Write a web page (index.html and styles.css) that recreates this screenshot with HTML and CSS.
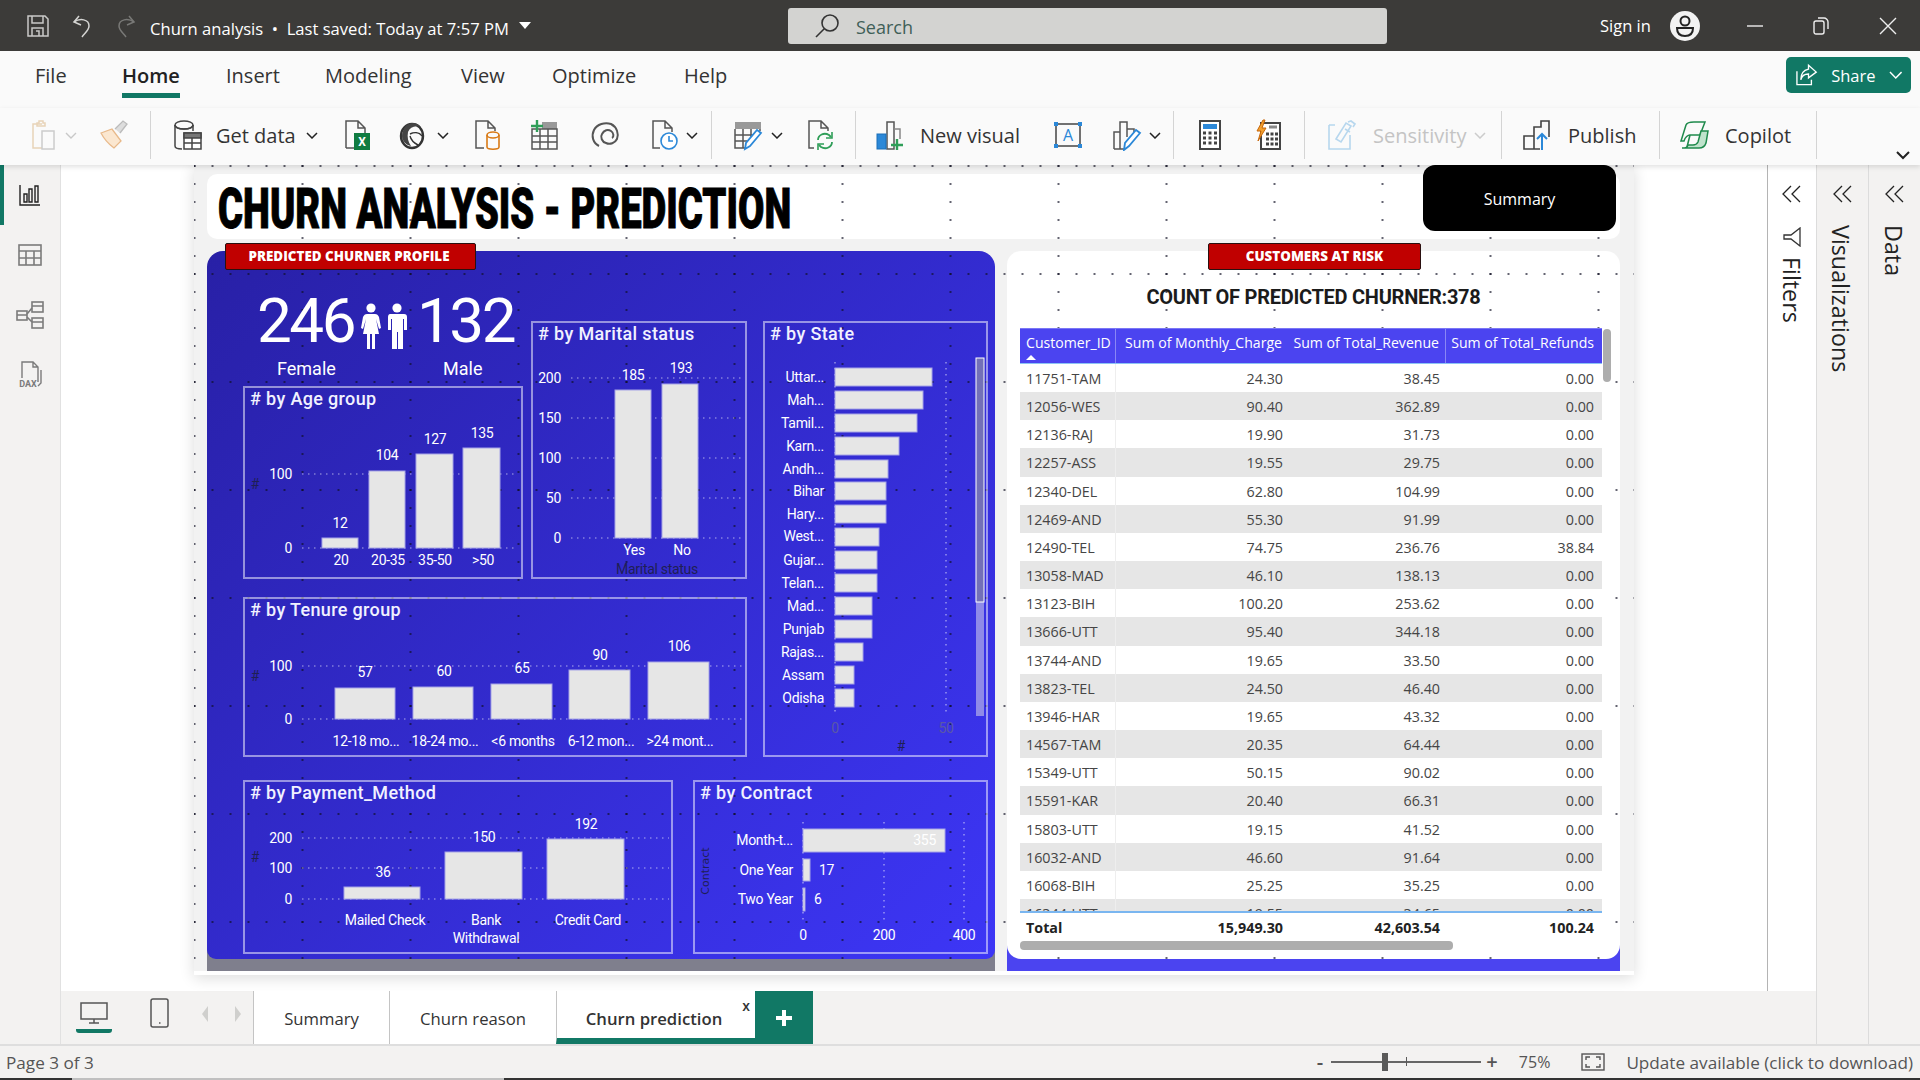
FILE: index.html
```html
<!DOCTYPE html>
<html lang="en">
<head>
    <meta charset="UTF-8">
    <title>Churn analysis</title>
    <link rel="stylesheet" href="styles.css">
</head>
<body>
<div class="app">

    <header class="titlebar">
        <div class="quick">
            <svg width="24" height="24" viewBox="0 0 24 24" fill="none" stroke="#c9c9c7" stroke-width="1.5"><path d="M2 2h17l3 3v17H2z"/><path d="M6 2v7h11V2M6 22v-8h11v8M10 17h3v5"/></svg>
            <svg width="24" height="24" viewBox="0 0 24 24" fill="none" stroke="#d5d5d3" stroke-width="1.5"><path d="M9 2 4 8l7 3"/><path d="M4 8c6-4 15-3 15 4 0 4-4 7-7 11"/></svg>
            <svg width="24" height="24" viewBox="0 0 24 24" fill="none" stroke="#797977" stroke-width="1.5"><path d="m15 2 5 6-7 3"/><path d="M20 8C14 4 5 5 5 12c0 4 4 7 7 11"/></svg>
        </div>
        <div class="doc-name">Churn analysis &nbsp;•&nbsp; Last saved: Today at 7:57 PM</div>
        <svg class="doc-caret" width="12" height="7" viewBox="0 0 12 7"><path d="M0 0h12L6 7z" fill="#fff"/></svg>
        <div class="search">
            <svg width="26" height="26" viewBox="0 0 26 26" fill="none" stroke="#333" stroke-width="1.6"><circle cx="16" cy="10" r="8"/><path d="M10 16 2 24"/></svg>
            <span>Search</span>
        </div>
        <div class="account">
            <span class="sign-in">Sign in</span>
            <svg width="30" height="30" viewBox="0 0 30 30"><circle cx="15" cy="15" r="15" fill="#f2f2f2"/><circle cx="15" cy="10" r="4.5" fill="none" stroke="#222" stroke-width="2"/><path d="M7 17h16c0 5-3 8-8 8s-8-3-8-8z" fill="none" stroke="#222" stroke-width="2"/></svg>
        </div>
        <div class="window-btns">
            <svg width="16" height="16" viewBox="0 0 16 16"><path d="M0 8h16" stroke="#eee" stroke-width="1.4"/></svg>
            <svg width="16" height="18" viewBox="0 0 16 18" fill="none" stroke="#eee" stroke-width="1.4"><rect x="1" y="4" width="10" height="13" rx="2"/><path d="M5 1h6c2 0 4 2 4 4v7"/></svg>
            <svg width="18" height="18" viewBox="0 0 18 18"><path d="m1 1 16 16M17 1 1 17" stroke="#eee" stroke-width="1.4"/></svg>
        </div>
    </header>

    <nav class="tabbar">
        <a class="menu-file">File</a>
        <a class="menu-home">Home</a>
        <a class="menu-insert">Insert</a>
        <a class="menu-modeling">Modeling</a>
        <a class="menu-view">View</a>
        <a class="menu-optimize">Optimize</a>
        <a class="menu-help">Help</a>
        <button class="share">
            <svg width="24" height="24" viewBox="0 0 24 24" fill="none" stroke="#fff" stroke-width="1.4"><path d="M2 8v14h15v-5"/><path d="M14 2l8 7-8 6v-4c-4 0-7 2-8 6 0-6 3-10 8-11z"/></svg>
            <span>Share</span>
            <svg width="14" height="8" viewBox="0 0 14 8" fill="none" stroke="#fff" stroke-width="1.5"><path d="m1 1 6 6 6-6"/></svg>
        </button>
    </nav>

    <div class="ribbon">
        <div class="rgroup g1">
            <svg width="32" height="32" viewBox="0 0 32 32" fill="none"><path d="M14 5H5v24h9" stroke="#e8d3b8" stroke-width="1.5"/><path d="M9 7V4h2V2h4v2h2v3z" stroke="#e8d3b8" stroke-width="1.5"/><rect x="14" y="12" width="12" height="18" stroke="#ccc" stroke-width="1.5"/></svg>
            <svg class="chev" width="12" height="7" viewBox="0 0 12 7" fill="none" stroke="#c8c8c8" stroke-width="1.4"><path d="m1 1 5 5 5-5"/></svg>
            <span></span>
            <svg width="32" height="32" viewBox="0 0 32 32" fill="none"><path d="m3 14 11-4 9 12-7 7C12 26 6 20 3 14z" fill="#fbe7d0" stroke="#e8b98a" stroke-width="1.3"/><path d="M17 10 25 2l4 3-7 9" fill="#ddd" stroke="#bbb" stroke-width="1.3"/></svg>
        </div>
        <div class="rgroup g2">
            <svg width="32" height="32" viewBox="0 0 32 32" fill="none" stroke="#444" stroke-width="1.5"><path d="M3 6v21c0 2 3 3 7 3M21 6v6"/><ellipse cx="12" cy="6" rx="9" ry="4"/><path d="M3 6c0 3 5 4 9 4s9-1 9-4"/><rect x="12" y="14" width="17" height="16" fill="#fff"/><path d="M12 14h17v5H12z" fill="#777"/><path d="M12 24h17M20 19v11"/></svg>
            <span class="rlabel tight">Get data</span>
            <svg class="chev" width="12" height="7" viewBox="0 0 12 7" fill="none" stroke="#222" stroke-width="1.5"><path d="m1 1 5 5 5-5"/></svg>
            <svg width="32" height="32" viewBox="0 0 32 32" fill="none"><path d="M5 29V2h12l7 7v5M17 2v7h7" stroke="#555" stroke-width="1.5"/><path d="M5 29h8" stroke="#555" stroke-width="1.5"/><rect x="13" y="14" width="16" height="17" fill="#107c41"/><text x="21" y="27" class="xl">X</text></svg>
            <svg width="32" height="32" viewBox="0 0 32 32" fill="none"><ellipse cx="15" cy="17" rx="11" ry="12" stroke="#333" stroke-width="2.4"/><path d="M7 10c2-6 12-9 17-2-6-2-11 0-13 5-1 5 0 10 3 14-5-1-9-5-9-10 0-3 1-5 2-7z" fill="#444"/><path d="M13 15c4-2 9-2 12 2M13 17c1 4 4 7 8 9" stroke="#333" stroke-width="1.4"/></svg>
            <svg class="chev" width="12" height="7" viewBox="0 0 12 7" fill="none" stroke="#222" stroke-width="1.5"><path d="m1 1 5 5 5-5"/></svg>
            <svg width="32" height="32" viewBox="0 0 32 32" fill="none"><path d="M13 29H5V2h12l7 7v3M17 2v7h7" stroke="#555" stroke-width="1.5"/><path d="M16 16v12c0 3 12 3 12 0V16" stroke="#d97a16" stroke-width="1.6"/><ellipse cx="22" cy="16" rx="6" ry="3" stroke="#d97a16" stroke-width="1.6"/></svg>
            <svg width="32" height="32" viewBox="0 0 32 32" fill="none" stroke="#555" stroke-width="1.5"><path d="M14 3h15v7H14z" fill="#999" stroke="none"/><rect x="4" y="10" width="25" height="20"/><path d="M4 17h25M4 23h25M12 10v20M20 10v20"/><path d="M9 1v12M3 7h12" stroke="#2f9e58" stroke-width="2.4"/></svg>
            <svg width="32" height="32" viewBox="0 0 32 32" fill="none" stroke="#555" stroke-width="2"><path d="M10 27C4 24 2 17 5 11 8 5 16 3 22 5c6 3 8 10 6 15-2 4-7 6-11 4-4-1-6-6-4-9 2-4 6-5 9-3 3 2 3 6 1 7"/></svg>
            <svg width="32" height="32" viewBox="0 0 32 32" fill="none"><path d="M12 29H5V2h12l7 7v4M17 2v7h7" stroke="#555" stroke-width="1.5"/><circle cx="21" cy="22" r="8" fill="#fff" stroke="#2b88d8" stroke-width="1.6"/><path d="M21 17v5h4" stroke="#2b88d8" stroke-width="1.6"/></svg>
            <svg class="chev" width="12" height="7" viewBox="0 0 12 7" fill="none" stroke="#222" stroke-width="1.5"><path d="m1 1 5 5 5-5"/></svg>
        </div>
        <div class="rgroup g3">
            <svg width="32" height="32" viewBox="0 0 32 32" fill="none" stroke="#555" stroke-width="1.5"><path d="M3 3h26v7H3z" fill="#999" stroke="none"/><path d="M3 10v19h12M3 16h18M3 22h12M11 10v19M19 10v8M28 10v2"/><path d="m13 30 1-6L25 11l4 3-11 13z" fill="#fff" stroke="#2b88d8" stroke-width="1.8"/></svg>
            <svg class="chev" width="12" height="7" viewBox="0 0 12 7" fill="none" stroke="#222" stroke-width="1.5"><path d="m1 1 5 5 5-5"/></svg>
            <svg width="32" height="32" viewBox="0 0 32 32" fill="none"><path d="M10 29H5V2h12l7 7v3M17 2v7h7" stroke="#555" stroke-width="1.5"/><path d="M14 21c0-5 6-8 11-5l2 2M28 23c0 5-6 8-11 5l-2-2" stroke="#2f9e58" stroke-width="1.8"/><path d="M28 13v6h-6M14 31v-6h6" stroke="#2f9e58" stroke-width="1.6"/></svg>
        </div>
        <div class="rgroup g4">
            <svg width="32" height="32" viewBox="0 0 32 32" fill="none"><rect x="14" y="3" width="7" height="27" stroke="#555" stroke-width="1.5"/><path d="M21 10h6v10" stroke="#888" stroke-width="1.5"/><rect x="4" y="15" width="9" height="15" fill="#2b88d8" stroke="#1b6fb8"/><path d="M24 20v11M18 26h12" stroke="#2f9e58" stroke-width="2.4"/></svg>
            <span class="rlabel">New visual</span>
            <svg width="30" height="28" viewBox="0 0 30 28" fill="none"><rect x="3" y="3" width="24" height="22" stroke="#444" stroke-width="1.5"/><path d="M1 1h4v4H1zM25 1h4v4h-4zM1 23h4v4H1zM25 23h4v4h-4z" fill="#2b88d8"/><text x="15" y="20" class="abox">A</text></svg>
            <svg width="32" height="32" viewBox="0 0 32 32" fill="none"><path d="M3 30V13h6V3h7v7h7v6M3 30h10M9 13v17M16 10v8" stroke="#555" stroke-width="1.5"/><path d="m13 31 1-7L25 11l4 3-11 13z" fill="#fff" stroke="#2b88d8" stroke-width="1.8"/></svg>
            <svg class="chev" width="12" height="7" viewBox="0 0 12 7" fill="none" stroke="#222" stroke-width="1.5"><path d="m1 1 5 5 5-5"/></svg>
        </div>
        <div class="rgroup g5">
            <svg width="24" height="32" viewBox="0 0 24 32" fill="none"><rect x="2" y="2" width="20" height="28" fill="#fff" stroke="#444" stroke-width="2"/><rect x="5" y="5" width="14" height="5" fill="#2b88d8"/><path d="M5 14h14M5 19h14M5 24h14" stroke="#444" stroke-width="3" stroke-dasharray="3 2.5"/></svg>
            <svg width="28" height="32" viewBox="0 0 28 32" fill="none"><rect x="7" y="4" width="19" height="26" fill="#fff" stroke="#444" stroke-width="2"/><path d="M15 8h8" stroke="#888" stroke-width="3"/><path d="M12 15h12M12 20h12M12 25h12" stroke="#444" stroke-width="3" stroke-dasharray="3 1.5"/><path d="M9 1 3 12h4L4 22l8-13H8l3-8z" fill="#f0a030" stroke="#c8670a"/></svg>
        </div>
        <div class="rgroup g6">
            <svg width="32" height="32" viewBox="0 0 32 32" fill="none" stroke="#b7d7ee" stroke-width="1.6"><path d="M3 6h6M3 6v24h21V16"/><path d="m10 20 10-16 5 3-10 16zM19 10l5 3M22 3l3-1 4 3-2 3"/></svg>
            <span class="rlabel muted">Sensitivity</span>
            <svg class="chev" width="12" height="7" viewBox="0 0 12 7" fill="none" stroke="#ccc" stroke-width="1.5"><path d="m1 1 5 5 5-5"/></svg>
        </div>
        <div class="rgroup g7">
            <svg width="32" height="32" viewBox="0 0 32 32" fill="none"><path d="M3 30V17h10v13zM13 17V8h7V2h8v16M13 30h6" stroke="#444" stroke-width="1.6"/><path d="M21 31V15M16 20l5-5 5 5" stroke="#2b88d8" stroke-width="2"/></svg>
            <span class="rlabel">Publish</span>
        </div>
        <div class="rgroup g8">
            <svg width="32" height="32" viewBox="0 0 32 32" fill="none" stroke="#1f8a4c" stroke-width="1.5"><path d="M8 6c1-3 5-3 8-3h11l-5 13H12c-2 0-5 2-6 6L3 22z"/><path d="M10 26c-1 3-3 3-6 3h17c3 0 6-2 7-5l2-12h-7l-3 11c-1 2-3 3-5 3z" fill="#bfe3cc"/><path d="M12 16 9 28"/></svg>
            <span class="rlabel">Copilot</span>
        </div>
        <svg class="ribbon-toggle" width="14" height="9" viewBox="0 0 14 9" fill="none" stroke="#222" stroke-width="2"><path d="m1 1 6 6 6-6"/></svg>
    </div>

    <main class="main">
        <aside class="rail">
            <span class="rail-active"></span>
            <svg width="22" height="22" viewBox="0 0 22 22" fill="none" stroke="#222" stroke-width="1.4"><path d="M1 1v20h20"/><path d="M5 10h3v8H5zM10 5h3v13h-3zM16 2h3v16h-3z"/></svg>
            <svg width="24" height="22" viewBox="0 0 24 22" fill="none" stroke="#7b7b7b" stroke-width="1.6"><rect x="1" y="1" width="22" height="20"/><path d="M1 7h22M1 14h22M8 7v14M16 7v14"/></svg>
            <svg width="28" height="28" viewBox="0 0 28 28" fill="none" stroke="#7b7b7b" stroke-width="1.6"><rect x="1" y="10" width="10" height="9"/><rect x="16" y="1" width="11" height="10"/><rect x="16" y="17" width="11" height="10"/><path d="M1 14h10M16 5h11M16 21h11M11 13l5-6M11 16l5 5"/></svg>
            <svg width="28" height="30" viewBox="0 0 28 30" fill="none" stroke="#7b7b7b" stroke-width="1.4"><path d="M6 18V2h11l5 5v15M17 2v5h5M25 10v13l-3 3"/><text x="12" y="27" class="dax">DAX</text></svg>
        </aside>

        <div class="center">
            <div class="workspace">
                <div class="canvas">
                    <section class="page dots">
                        <div class="banner dots">
                            <h1>CHURN ANALYSIS - PREDICTION</h1>
                        </div>
                        <button class="summary-btn">Summary</button>

                        <div class="report-row">
                            <div class="left-wrap">
                                <span class="red-label left-label">PREDICTED CHURNER PROFILE</span>
                                <div class="panel">

                                    <div class="kpi">
                                        <div class="kpi-nums">
                                            <span class="kpi-num">246</span>
                                            <svg width="46" height="46" viewBox="0 0 46 46" fill="#fff"><circle cx="10" cy="5" r="4.6"/><path d="M6 11h8c2 0 3 1 4 3l2 11-2 1-3-10 3 15h-4v15h-3V31H9v15H6V31H2l3-15-3 10-2-1 2-11c1-2 2-3 4-3z"/><circle cx="36" cy="5" r="4.6"/><path d="M29 11h14c2 0 3 1 3 3v13h-3V16h-1v30h-5V29h-1v17h-5V16h-1v11h-3V14c0-2 1-3 2-3z"/></svg>
                                            <span class="kpi-num">132</span>
                                        </div>
                                        <div class="kpi-labels">
                                            <span class="kpi-female">Female</span>
                                            <span>Male</span>
                                        </div>
                                    </div>

                                    <div class="visual v-age">
                                        <h2># by Age group</h2>
                                        <svg width="280" height="167" viewBox="243 412 280 167">
                                            <path class="grid" d="M302 474H518M302 548H518"/>
                                            <text class="yl" x="292" y="479">100</text>
                                            <text class="yl" x="292" y="553">0</text>
                                            <text class="axt" x="255" y="489">#</text>
                                            <rect class="bar" x="322" y="538" width="36" height="10"/>
                                            <rect class="bar" x="369" y="471" width="36" height="77"/>
                                            <rect class="bar" x="416" y="454" width="37" height="94"/>
                                            <rect class="bar" x="463" y="448" width="37" height="100"/>
                                            <text class="vl" x="340" y="528">12</text>
                                            <text class="vl" x="387" y="460">104</text>
                                            <text class="vl" x="435" y="444">127</text>
                                            <text class="vl" x="482" y="438">135</text>
                                            <text class="vl" x="341" y="565">20</text>
                                            <text class="vl" x="388" y="565">20-35</text>
                                            <text class="vl" x="435" y="565">35-50</text>
                                            <text class="vl" x="483" y="565">&gt;50</text>
                                        </svg>
                                    </div>

                                    <div class="visual v-marital">
                                        <h2># by Marital status</h2>
                                        <svg width="216" height="233" viewBox="531 347 216 233">
                                            <path class="grid" d="M571 378H742M571 418H742M571 458H742M571 498H742M571 538H742"/>
                                            <text class="yl" x="561" y="383">200</text>
                                            <text class="yl" x="561" y="423">150</text>
                                            <text class="yl" x="561" y="463">100</text>
                                            <text class="yl" x="561" y="503">50</text>
                                            <text class="yl" x="561" y="543">0</text>
                                            <rect class="bar" x="615" y="390" width="36" height="148"/>
                                            <rect class="bar" x="662" y="384" width="36" height="154"/>
                                            <text class="vl" x="633" y="380">185</text>
                                            <text class="vl" x="681" y="373">193</text>
                                            <text class="vl" x="634" y="555">Yes</text>
                                            <text class="vl" x="682" y="555">No</text>
                                            <text class="axt" x="657" y="574">Marital status</text>
                                        </svg>
                                    </div>

                                    <div class="visual v-state">
                                        <h2># by State</h2>
                                        <svg width="225" height="410" viewBox="763 347 225 410">
                                            <path class="grid" d="M835 362V715M946 362V715"/>
                                            <rect class="bar" x="835" y="368" width="97" height="18"/>
                                            <rect class="bar" x="835" y="391" width="88" height="18"/>
                                            <rect class="bar" x="835" y="414" width="82" height="18"/>
                                            <rect class="bar" x="835" y="437" width="64" height="18"/>
                                            <rect class="bar" x="835" y="460" width="53" height="18"/>
                                            <rect class="bar" x="835" y="482" width="51" height="18"/>
                                            <rect class="bar" x="835" y="505" width="51" height="18"/>
                                            <rect class="bar" x="835" y="528" width="44" height="18"/>
                                            <rect class="bar" x="835" y="551" width="42" height="18"/>
                                            <rect class="bar" x="835" y="574" width="42" height="18"/>
                                            <rect class="bar" x="835" y="597" width="37" height="18"/>
                                            <rect class="bar" x="835" y="620" width="37" height="18"/>
                                            <rect class="bar" x="835" y="643" width="28" height="18"/>
                                            <rect class="bar" x="835" y="666" width="19" height="18"/>
                                            <rect class="bar" x="835" y="689" width="19" height="18"/>
                                            <text class="yl" x="824" y="382">Uttar...</text>
                                            <text class="yl" x="824" y="405">Mah...</text>
                                            <text class="yl" x="824" y="428">Tamil...</text>
                                            <text class="yl" x="824" y="451">Karn...</text>
                                            <text class="yl" x="824" y="474">Andh...</text>
                                            <text class="yl" x="824" y="496">Bihar</text>
                                            <text class="yl" x="824" y="519">Hary...</text>
                                            <text class="yl" x="824" y="541">West...</text>
                                            <text class="yl" x="824" y="565">Gujar...</text>
                                            <text class="yl" x="824" y="588">Telan...</text>
                                            <text class="yl" x="824" y="611">Mad...</text>
                                            <text class="yl" x="824" y="634">Punjab</text>
                                            <text class="yl" x="824" y="657">Rajas...</text>
                                            <text class="yl" x="824" y="680">Assam</text>
                                            <text class="yl" x="824" y="703">Odisha</text>
                                            <text class="dim" x="835" y="733">0</text>
                                            <text class="dim" x="946" y="733">50</text>
                                            <text class="axt" x="901" y="751">#</text>
                                            <rect class="track" x="976" y="358" width="8" height="358"/>
                                            <rect class="thumb" x="976" y="358" width="8" height="244"/>
                                        </svg>
                                    </div>

                                    <div class="visual v-tenure">
                                        <h2># by Tenure group</h2>
                                        <svg width="504" height="134" viewBox="243 623 504 134">
                                            <path class="grid" d="M302 666H742M302 719H742"/>
                                            <text class="yl" x="292" y="671">100</text>
                                            <text class="yl" x="292" y="724">0</text>
                                            <text class="axt" x="255" y="681">#</text>
                                            <rect class="bar" x="335" y="688" width="60" height="31"/>
                                            <rect class="bar" x="413" y="687" width="60" height="32"/>
                                            <rect class="bar" x="491" y="684" width="61" height="35"/>
                                            <rect class="bar" x="569" y="670" width="61" height="49"/>
                                            <rect class="bar" x="648" y="662" width="61" height="57"/>
                                            <text class="vl" x="365" y="677">57</text>
                                            <text class="vl" x="444" y="676">60</text>
                                            <text class="vl" x="522" y="673">65</text>
                                            <text class="vl" x="600" y="660">90</text>
                                            <text class="vl" x="679" y="651">106</text>
                                            <text class="vl" x="366" y="746">12-18 mo...</text>
                                            <text class="vl" x="445" y="746">18-24 mo...</text>
                                            <text class="vl" x="523" y="746">&lt;6 months</text>
                                            <text class="vl" x="601" y="746">6-12 mon...</text>
                                            <text class="vl" x="680" y="746">&gt;24 mont...</text>
                                        </svg>
                                    </div>

                                    <div class="visual v-payment">
                                        <h2># by Payment_Method</h2>
                                        <svg width="430" height="148" viewBox="243 806 430 148">
                                            <path class="grid" d="M302 838H669M302 868H669M302 899H669"/>
                                            <text class="yl" x="292" y="843">200</text>
                                            <text class="yl" x="292" y="873">100</text>
                                            <text class="yl" x="292" y="904">0</text>
                                            <text class="axt" x="255" y="862">#</text>
                                            <rect class="bar" x="344" y="887" width="76" height="12"/>
                                            <rect class="bar" x="445" y="852" width="77" height="47"/>
                                            <rect class="bar" x="547" y="839" width="77" height="60"/>
                                            <text class="vl" x="383" y="877">36</text>
                                            <text class="vl" x="484" y="842">150</text>
                                            <text class="vl" x="586" y="829">192</text>
                                            <text class="vl" x="385" y="925">Mailed Check</text>
                                            <text class="vl" x="486" y="925">Bank</text>
                                            <text class="vl" x="486" y="943">Withdrawal</text>
                                            <text class="vl" x="588" y="925">Credit Card</text>
                                        </svg>
                                    </div>

                                    <div class="visual v-contract">
                                        <h2># by Contract</h2>
                                        <svg width="295" height="148" viewBox="693 806 295 148">
                                            <path class="grid" d="M803 822V923M884 822V923M964 822V923"/>
                                            <rect class="bar" x="803" y="829" width="142" height="23"/>
                                            <rect class="bar" x="803" y="859" width="7" height="22"/>
                                            <rect class="bar" x="803" y="888" width="2" height="23"/>
                                            <text class="yl" x="793" y="845">Month-t...</text>
                                            <text class="yl" x="793" y="875">One Year</text>
                                            <text class="yl" x="793" y="904">Two Year</text>
                                            <text class="yl" x="936" y="845">355</text>
                                            <text class="vs" x="819" y="875">17</text>
                                            <text class="vs" x="814" y="904">6</text>
                                            <text class="vl" x="803" y="940">0</text>
                                            <text class="vl" x="884" y="940">200</text>
                                            <text class="vl" x="964" y="940">400</text>
                                            <text class="contract-axis" transform="translate(709 871) rotate(-90)">Contract</text>
                                        </svg>
                                    </div>
                                </div>
                            </div>

                            <div class="right-wrap">
                                <span class="red-label right-label">CUSTOMERS AT RISK</span>
                                <div class="risk-card dots">
                                    <h3>COUNT OF PREDICTED CHURNER:378</h3>
                                    <div class="tbl">
                                        <div class="tr thead">
                                            <div class="td id">Customer_ID<i class="sort"></i></div>
                                            <div class="td">Sum of Monthly_Charge</div>
                                            <div class="td">Sum of Total_Revenue</div>
                                            <div class="td">Sum of Total_Refunds</div>
                                        </div>
                                        <div class="tbody">
                                            <div class="tr"><div class="td id">11751-TAM</div><div class="td">24.30</div><div class="td">38.45</div><div class="td">0.00</div></div>
                                            <div class="tr"><div class="td id">12056-WES</div><div class="td">90.40</div><div class="td">362.89</div><div class="td">0.00</div></div>
                                            <div class="tr"><div class="td id">12136-RAJ</div><div class="td">19.90</div><div class="td">31.73</div><div class="td">0.00</div></div>
                                            <div class="tr"><div class="td id">12257-ASS</div><div class="td">19.55</div><div class="td">29.75</div><div class="td">0.00</div></div>
                                            <div class="tr"><div class="td id">12340-DEL</div><div class="td">62.80</div><div class="td">104.99</div><div class="td">0.00</div></div>
                                            <div class="tr"><div class="td id">12469-AND</div><div class="td">55.30</div><div class="td">91.99</div><div class="td">0.00</div></div>
                                            <div class="tr"><div class="td id">12490-TEL</div><div class="td">74.75</div><div class="td">236.76</div><div class="td">38.84</div></div>
                                            <div class="tr"><div class="td id">13058-MAD</div><div class="td">46.10</div><div class="td">138.13</div><div class="td">0.00</div></div>
                                            <div class="tr"><div class="td id">13123-BIH</div><div class="td">100.20</div><div class="td">253.62</div><div class="td">0.00</div></div>
                                            <div class="tr"><div class="td id">13666-UTT</div><div class="td">95.40</div><div class="td">344.18</div><div class="td">0.00</div></div>
                                            <div class="tr"><div class="td id">13744-AND</div><div class="td">19.65</div><div class="td">33.50</div><div class="td">0.00</div></div>
                                            <div class="tr"><div class="td id">13823-TEL</div><div class="td">24.50</div><div class="td">46.40</div><div class="td">0.00</div></div>
                                            <div class="tr"><div class="td id">13946-HAR</div><div class="td">19.65</div><div class="td">43.32</div><div class="td">0.00</div></div>
                                            <div class="tr"><div class="td id">14567-TAM</div><div class="td">20.35</div><div class="td">64.44</div><div class="td">0.00</div></div>
                                            <div class="tr"><div class="td id">15349-UTT</div><div class="td">50.15</div><div class="td">90.02</div><div class="td">0.00</div></div>
                                            <div class="tr"><div class="td id">15591-KAR</div><div class="td">20.40</div><div class="td">66.31</div><div class="td">0.00</div></div>
                                            <div class="tr"><div class="td id">15803-UTT</div><div class="td">19.15</div><div class="td">41.52</div><div class="td">0.00</div></div>
                                            <div class="tr"><div class="td id">16032-AND</div><div class="td">46.60</div><div class="td">91.64</div><div class="td">0.00</div></div>
                                            <div class="tr"><div class="td id">16068-BIH</div><div class="td">25.25</div><div class="td">35.25</div><div class="td">0.00</div></div>
                                            <div class="tr"><div class="td id">16344-UTT</div><div class="td">19.55</div><div class="td">34.65</div><div class="td">0.00</div></div>
                                        </div>
                                        <div class="tr tfoot">
                                            <div class="td id">Total</div><div class="td">15,949.30</div><div class="td">42,603.54</div><div class="td">100.24</div>
                                        </div>
                                        <div class="hbar"></div>
                                        <div class="vbar"></div>
                                    </div>
                                </div>
                            </div>
                        </div>
                    </section>
                </div>
                <aside class="pane filters">
                    <svg width="20" height="18" viewBox="0 0 20 18" fill="none" stroke="#222" stroke-width="1.3"><path d="M9 1 1 9l8 8M18 1l-8 8 8 8"/></svg>
                    <svg class="funnel" width="18" height="20" viewBox="0 0 18 20" fill="none" stroke="#333" stroke-width="1.3"><path d="M17 1v18L8 12H1V8h7z"/></svg>
                    <span class="pane-title">Filters</span>
                </aside>
            </div>

            <div class="page-tabs">
                <div class="view-switch">
                    <span class="view-desktop">
                        <svg width="28" height="22" viewBox="0 0 28 22" fill="none" stroke="#555" stroke-width="1.5"><rect x="1" y="1" width="26" height="16"/><path d="M14 17v4M9 21h10"/></svg>
                    </span>
                    <svg class="view-phone" width="19" height="30" viewBox="0 0 19 30" fill="none" stroke="#555" stroke-width="1.5"><rect x="1" y="1" width="17" height="28" rx="2"/><path d="M9 25h1.500"/></svg>
                    <svg class="view-prev" width="8" height="18" viewBox="0 0 8 18"><path d="M7 1v16L1 9z" fill="#cfcfcd"/></svg>
                    <svg class="view-next" width="8" height="18" viewBox="0 0 8 18"><path d="M1 1v16l6-8z" fill="#cfcfcd"/></svg>
                </div>
                <a class="page-tab tab-summary">Summary</a>
                <a class="page-tab tab-reason">Churn reason</a>
                <a class="page-tab tab-active">Churn prediction<span class="tab-close">x</span></a>
                <a class="tab-add">
                    <svg width="18" height="18" viewBox="0 0 18 18"><path d="M9 1v16M1 9h16" stroke="#fff" stroke-width="4"/></svg>
                </a>
            </div>
        </div>

        <aside class="pane viz">
            <svg width="20" height="18" viewBox="0 0 20 18" fill="none" stroke="#222" stroke-width="1.3"><path d="M9 1 1 9l8 8M18 1l-8 8 8 8"/></svg>
            <span class="pane-title">Visualizations</span>
        </aside>
        <aside class="pane data">
            <svg width="20" height="18" viewBox="0 0 20 18" fill="none" stroke="#222" stroke-width="1.3"><path d="M9 1 1 9l8 8M18 1l-8 8 8 8"/></svg>
            <span class="pane-title">Data</span>
        </aside>
    </main>

    <footer class="statusbar">
        <span class="page-count">Page 3 of 3</span>
        <div class="zoom-ctl">
            <span class="zoom-sign">-</span>
            <div class="slider"><i class="slider-thumb"></i><i class="slider-tick"></i></div>
            <span class="zoom-sign">+</span>
            <span class="zoom-val">75%</span>
            <svg width="24" height="18" viewBox="0 0 24 18" fill="none"><rect x="1" y="1" width="22" height="16" stroke="#555" stroke-width="1.4"/><path d="M5 7V4h4M15 4h4v3M19 11v3h-4M9 14H5v-3" stroke="#555" stroke-width="1.4"/></svg>
            <span class="update">Update available (click to download)</span>
        </div>
    </footer>
    <div class="taskstrip"><i></i><i></i><i></i></div>
</div>
</body>
</html>
```

FILE: styles.css
```css
* {
    box-sizing: border-box;
}

:root {
    --ui: "Open Sans", "Noto Sans", sans-serif;
    --din: Roboto, "Liberation Sans", sans-serif;
    --dot-row: radial-gradient(circle, rgba(15,15,35,.65) .7px, transparent 1.2px);
    --dot-col: radial-gradient(circle, rgba(15,15,35,.65) .7px, transparent 1.2px);
    --green: #117865;
}

html, body {
    margin: 0;
    height: 100%;
    overflow: hidden;
}

body {
    font-family: var(--ui);
    color: #333;
    background: #f3f2f1;
}

.app {
    display: flex;
    flex-direction: column;
    width: 1920px;
    height: 1080px;
}

/* title bar */

.titlebar {
    display: flex;
    align-items: center;
    height: 51px;
    flex: none;
    background: #3c3b39;
    color: #fff;
}

.quick {
    display: grid;
    grid-template-columns: 44px 44px 36px;
    padding-left: 26px;
}

.doc-name {
    font-size: 16.6px;
    margin-top: 5px;
    white-space: nowrap;
    width: 369px;
}

.doc-caret {
    margin-right: 257px;
}

.search {
    display: flex;
    align-items: center;
    gap: 16px;
    width: 599px;
    height: 36px;
    padding-left: 26px;
    background: #d3d3d1;
    border-radius: 3px;
    font-size: 18px;
    color: #3f5f58;
}

.search span {
    padding-top: 2px;
}

.account {
    display: flex;
    align-items: center;
    gap: 19px;
    margin-left: 213px;
}

.sign-in {
    font-size: 16.5px;
}

.window-btns {
    display: grid;
    grid-template-columns: 66px 66px 18px;
    margin-left: 47px;
    align-items: center;
}

/* menu tabs */

.tabbar {
    position: relative;
    height: 57px;
    flex: none;
    display: flex;
    align-items: flex-start;
    background: #fafafa;
    font-size: 20px;
    color: #333;
}

.tabbar a {
    position: absolute;
    top: 11px;
    line-height: 28px;
}

.menu-file { left: 35px; }
.menu-home { left: 122px; font-weight: 600; color: #222; }
.menu-insert { left: 226px; }
.menu-modeling { left: 325px; }
.menu-view { left: 461px; }
.menu-optimize { left: 552px; }
.menu-help { left: 684px; }

.menu-home::after {
    content: "";
    display: block;
    height: 5px;
    margin-top: 3px;
    background: var(--green);
}

.share {
    display: flex;
    align-items: center;
    gap: 13px;
    margin-left: auto;
    margin-right: 9px;
    margin-top: 6px;
    width: 125px;
    height: 36px;
    padding: 0 9px;
    border: 0;
    border-radius: 5px;
    background: var(--green);
    color: #fff;
    font: 16.5px var(--ui);
}

/* ribbon */

.ribbon {
    position: relative;
    z-index: 2;
    height: 57px;
    flex: none;
    display: flex;
    background: #fafafa;
    box-shadow: 0 2px 5px rgba(0,0,0,.12);
}

.rgroup {
    display: grid;
    align-items: center;
    justify-items: center;
    height: 48px;
    margin-top: 3px;
    border-right: 1px solid #d4d4d4;
    flex: none;
}

.g1 { width: 151px; padding-left: 28px; grid-template-columns: 32px 22px 16px 32px; justify-content: start; }
.g2 { width: 561px; padding-left: 21px; grid-template-columns: 32px 100px 16px 74px 38px 22px 66px 48px 74px 44px 12px; justify-content: start; }
.g3 { width: 144px; padding-left: 20px; grid-template-columns: 32px 26px 60px; justify-content: start; }
.g4 { width: 318px; padding-left: 17px; grid-template-columns: 32px 125px 75px 44px 12px; justify-content: start; }
.g5 { width: 131px; padding-left: 10px; grid-template-columns: 52px 64px; justify-content: start; }
.g6 { width: 197px; padding-left: 21px; grid-template-columns: 32px 115px 14px; justify-content: start; }
.g7 { width: 158px; padding-left: 19px; grid-template-columns: 32px auto; justify-content: start; }
.g8 { width: 157px; padding-left: 18px; grid-template-columns: 32px auto; justify-content: start; }

.rlabel {
    justify-self: start;
    padding-left: 15px;
    font-size: 20px;
    color: #333;
    white-space: nowrap;
}

.rlabel.tight {
    padding-left: 12px;
}

.rlabel.muted {
    color: #c4c4c4;
}

.ribbon-toggle {
    margin: 43px 0 0 79px;
}

.xl {
    font: bold 12px var(--din);
    fill: #fff;
    text-anchor: middle;
}

.abox {
    font: 16px var(--ui);
    fill: #2b88d8;
    text-anchor: middle;
}

.dax {
    font: bold 9px var(--din);
    fill: #7b7b7b;
    stroke: none;
    text-anchor: middle;
}

/* main area */

.main {
    display: flex;
    height: 879px;
    flex: none;
}

.rail {
    position: relative;
    width: 61px;
    flex: none;
    display: grid;
    grid-auto-rows: 60px;
    justify-items: center;
    align-items: center;
    background: #f3f2f1;
    border-right: 1px solid #e1e1e1;
}

.rail-active {
    position: absolute;
    left: 0;
    top: 0;
    width: 4px;
    height: 60px;
    background: var(--green);
}

.center {
    width: 1755px;
    flex: none;
    display: flex;
    flex-direction: column;
}

.workspace {
    display: flex;
    height: 826px;
    flex: none;
}

.canvas {
    width: 1706px;
    flex: none;
    padding-left: 133px;
    background: #fff;
}

.dots {
    background-image: var(--dot-row), var(--dot-col);
    background-size: 18px 108px, 108px 18px;
    background-position: 5.5px 4px, 32.5px -5px;
    background-attachment: fixed;
    background-repeat: repeat;
}

.page {
    position: relative;
    width: 1440px;
    height: 810px;
    padding: 9px 14px 0 13px;
    background-color: #f2f2f2;
    border-bottom: 4px solid #fff;
    box-shadow: 0 3px 14px rgba(0,0,0,.14);
}

.banner {
    height: 65px;
    padding: 10px 0 0 11px;
    background-color: #fff;
    border-radius: 10px;
}

.banner h1 {
    margin: 0;
    font: 900 56px/50px Roboto, sans-serif;
    color: #000;
    -webkit-text-stroke: 1px #000;
    white-space: nowrap;
    transform: scaleX(.682);
    transform-origin: left center;
}

.summary-btn {
    position: absolute;
    top: 0;
    right: 18px;
    width: 193px;
    height: 66px;
    padding-top: 3px;
    border: 0;
    border-radius: 12px;
    background: #000;
    color: #fff;
    font: 16px var(--ui);
}

.report-row {
    display: flex;
    gap: 12px;
    margin-top: 12px;
}

.left-wrap, .right-wrap {
    position: relative;
    height: 720px;
    flex: none;
}

.left-wrap {
    width: 788px;
    background: linear-gradient(transparent 690px, #7f7f8d 690px);
}

.right-wrap {
    width: 613px;
    background: linear-gradient(transparent 690px, #4b44f0 690px);
}

.red-label {
    position: absolute;
    top: -8px;
    z-index: 1;
    height: 27px;
    background: #c00000;
    border: 1px solid #2a1010;
    border-radius: 2px;
    color: #fff;
    font: 800 13.4px/25px var(--ui);
    text-align: center;
    white-space: nowrap;
}

.left-label { left: 18px; width: 251px; padding-right: 3px; }
.right-label { left: 201px; width: 213px; }

/* blue panel */

.panel {
    display: grid;
    grid-template-columns: 280px 8px 142px 20px 54px 16px 225px;
    grid-template-rows: 65px 193px 18px 160px 23px 174px;
    height: 708px;
    padding: 70px 0 0 36px;
    border-radius: 16px 16px 9px 9px;
    background-image: var(--dot-row), var(--dot-col), linear-gradient(135deg, #2820a6, #3d36f6);
    background-size: 18px 108px, 108px 18px, auto;
    background-position: 5.5px 4px, 32.5px -5px, 0 0;
    background-attachment: fixed, fixed, scroll;
    background-repeat: repeat, repeat, no-repeat;
}

.kpi {
    grid-column: 1;
    grid-row: 1;
    margin-top: -35px;
    color: #fff;
}

.kpi-nums {
    display: flex;
    align-items: flex-start;
    gap: 10px;
    padding-left: 14px;
    height: 66px;
}

.kpi-nums svg {
    margin-top: 17px;
    flex: none;
}

.kpi-num {
    width: 94px;
    margin-top: -1px;
    font: 400 62px/72px var(--din);
    letter-spacing: -2.5px;
    white-space: nowrap;
}

.kpi-labels {
    display: flex;
    padding-left: 34px;
    font: 18px/24px var(--din);
    margin-top: 5px;
}

.kpi-female {
    width: 166px;
}

.visual {
    position: relative;
    box-shadow: inset 0 0 0 2px rgba(255,255,255,.5);
}

.visual h2 {
    margin: 0;
    height: 26px;
    padding-left: 7px;
    font: 500 18px/26px var(--din);
    letter-spacing: .35px;
    color: #f1f1ff;
}

.visual svg {
    display: block;
}

.v-age { grid-column: 1; grid-row: 2; }
.v-marital { grid-column: 3 / 6; grid-row: 1 / 3; }
.v-state { grid-column: 7; grid-row: 1 / 5; }
.v-tenure { grid-column: 1 / 6; grid-row: 4; }
.v-payment { grid-column: 1 / 4; grid-row: 6; }
.v-contract { grid-column: 5 / 8; grid-row: 6; }

.grid {
    fill: none;
    stroke: rgba(255,255,255,.6);
    stroke-width: 1.2;
    stroke-dasharray: 1.5 4.5;
}

.bar {
    fill: #e6e6e6;
    stroke: #a6a4e6;
    stroke-width: 1;
}

.track { fill: #8f8ae8; }

.thumb {
    fill: #7370b8;
    stroke: #fff;
    stroke-width: 1;
}

.yl, .vl, .vs, .axt, .dim, .contract-axis {
    font-family: var(--din);
    font-size: 14px;
    letter-spacing: -.3px;
    fill: #fff;
}

.yl { text-anchor: end; }
.vl { text-anchor: middle; }
.vs { text-anchor: start; }

.axt {
    text-anchor: middle;
    fill: #1f1f55;
}

.dim {
    text-anchor: middle;
    fill: #5a58a8;
}

.contract-axis {
    font: 11px "DejaVu Sans", sans-serif;
    letter-spacing: 0;
    fill: #1f1f55;
    text-anchor: middle;
}

/* customers at risk */

.risk-card {
    position: relative;
    height: 708px;
    background-color: #fff;
    border-radius: 14px;
}

.risk-card h3 {
    margin: 0;
    height: 77px;
    padding-top: 28px;
    font: bold 20px/36px Roboto, sans-serif;
    text-align: center;
    color: #1b1b1b;
    letter-spacing: -.27px;
}

.tbl {
    position: relative;
    width: 582px;
    margin-left: 13px;
    font-size: 14.3px;
}

.tr {
    display: grid;
    grid-template-columns: 96px 170px 160px 156px;
    height: 28.16px;
    line-height: 30px;
    color: #454545;
    background: #fff;
}

.tbody .tr:nth-child(even) {
    background: #e6e6e6;
}

.td {
    text-align: right;
    padding-right: 7px;
    white-space: nowrap;
}

.td:nth-child(2) { padding-right: 3px; }
.td:nth-child(3) { padding-right: 6px; }
.td:nth-child(4) { padding-right: 8px; }

.td.id {
    text-align: left;
    padding-left: 6px;
    border-right: 1px solid #eee;
}

.thead {
    height: 36px;
    background: #4b44f0;
    color: #fff;
    border-top: 1px solid #7a76f5;
    border-bottom: 1px solid #8cc4f5;
    line-height: 28px;
    font-size: 14.1px;
}

.thead .td {
    text-align: right;
}

.thead .td.id {
    text-align: left;
    border-right: 1px solid #8a86f5;
    position: relative;
}

.thead .td:nth-child(3) {
    border-right: 1px solid #8a86f5;
}

.thead .td:nth-child(2) { padding-right: 4px; }
.thead .td:nth-child(3) { padding-right: 6px; }
.thead .td:nth-child(4) { padding-right: 8px; }

.sort {
    position: absolute;
    left: 6px;
    bottom: 3px;
    border: 5px solid transparent;
    border-top: 0;
    border-bottom: 5px solid #fff;
}

.tbody {
    height: 549px;
    overflow: hidden;
    border-bottom: 2px solid #7ab6f0;
}

.tfoot {
    height: 28px;
    color: #222;
    font-weight: 700;
    background: #fff;
}

.tfoot .td.id {
    border-right: 0;
}

.hbar {
    width: 433px;
    height: 9px;
    background: #adadad;
    border-radius: 4px;
}

.vbar {
    position: absolute;
    left: 583px;
    top: 1px;
    width: 8px;
    height: 53px;
    background: #adadad;
    border-radius: 4px;
}

/* side panes */

.pane {
    display: flex;
    flex-direction: column;
    align-items: center;
    padding-top: 20px;
    flex: none;
}

.pane-title {
    writing-mode: vertical-rl;
    font-size: 23.3px;
    line-height: 26px;
    color: #222;
}

.filters {
    width: 49px;
    background: #fff;
    border-left: 1px solid #b4b4b4;
}

.funnel {
    margin-top: 24px;
}

.filters .pane-title {
    margin-top: 10px;
}

.viz, .data {
    width: 52px;
    background: #f3f2f1;
    border-left: 1px solid #dcdcdc;
}

.viz .pane-title, .data .pane-title {
    margin-top: 22px;
    margin-right: 4px;
}

.data .pane-title {
    margin-right: 2px;
}

/* page tabs */

.page-tabs {
    display: flex;
    height: 53px;
    flex: none;
    background: #f3f2f1;
}

.view-switch {
    display: flex;
    align-items: flex-start;
    width: 192px;
    padding-left: 15px;
    padding-top: 7px;
}

.view-desktop {
    display: block;
    width: 36px;
    height: 35px;
    padding: 4px 0 0 4px;
    border-bottom: 4px solid var(--green);
    border-radius: 0 0 3px 3px;
}

.view-phone { margin: 0 0 0 38px; }
.view-prev { margin: 7px 0 0 32px; }
.view-next { margin: 7px 0 0 25px; }

.page-tab {
    position: relative;
    display: block;
    height: 53px;
    background: #fff;
    border-left: 1px solid #c4c4c4;
    text-align: center;
    font-size: 16.7px;
    line-height: 56px;
    color: #333;
}

.tab-summary { width: 136px; }
.tab-reason { width: 167px; }

.tab-active {
    width: 199px;
    padding-right: 4px;
    font-weight: 600;
    border-bottom: 6px solid var(--green);
}

.tab-close {
    position: absolute;
    right: 5px;
    top: 3px;
    font-size: 14px;
    line-height: 24px;
    font-weight: 600;
}

.tab-add {
    display: flex;
    align-items: center;
    justify-content: center;
    width: 58px;
    height: 53px;
    background: var(--green);
}

/* status bar */

.statusbar {
    display: flex;
    align-items: center;
    justify-content: space-between;
    height: 34px;
    flex: none;
    padding: 0 7px 0 6px;
    background: #f3f2f1;
    border-top: 2px solid #dedede;
    font-size: 17.15px;
    color: #555;
}

.zoom-ctl {
    display: flex;
    align-items: center;
}

.zoom-sign {
    width: 22px;
    text-align: center;
    font-size: 20px;
    font-weight: 600;
    line-height: 20px;
}

.slider {
    position: relative;
    width: 150px;
    height: 2px;
    background: #666;
}

.slider-thumb {
    position: absolute;
    left: 51px;
    top: -8px;
    width: 6px;
    height: 18px;
    background: #5a5a5a;
}

.slider-tick {
    position: absolute;
    left: 75px;
    top: -4px;
    width: 1px;
    height: 9px;
    background: #5a5a5a;
}

.zoom-val {
    margin: 0 31px 0 16px;
    font-size: 16px;
}

.update {
    margin-left: 21px;
}

.taskstrip {
    display: grid;
    grid-template-columns: 72px 432px 1fr;
    height: 2px;
    flex: none;
    background: #333;
}

.taskstrip i:nth-child(2) {
    background: #c0c0c0;
}
```
